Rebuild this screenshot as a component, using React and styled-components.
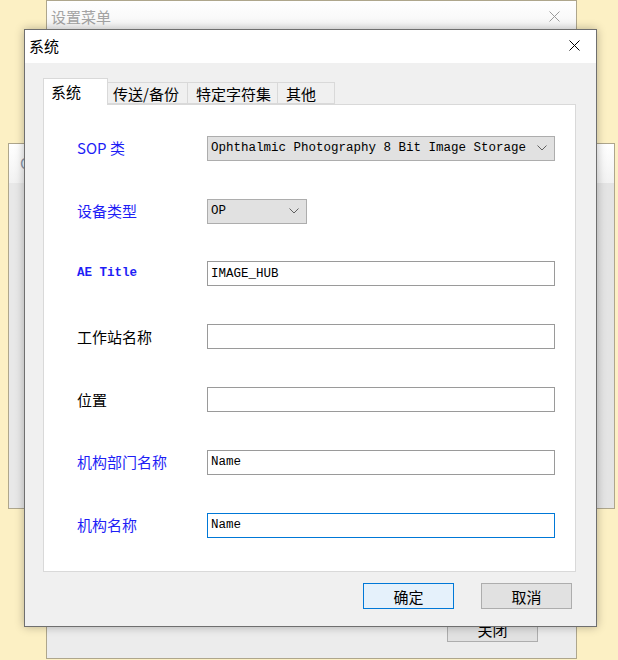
import React from 'react'
import styled, { createGlobalStyle } from 'styled-components'

const cjk = '"Noto Sans CJK SC", "Noto Sans", sans-serif'
const mono = '"Liberation Mono", "DejaVu Sans Mono", monospace'

const GlobalStyle = createGlobalStyle`
  html, body {
    margin: 0;
    padding: 0;
    background: #fcf0c4;
    font-family: ${cjk};
  }
`

export default function App() {
  return (
    <Desktop>
      <GlobalStyle />

      <Window $left={46} $top={0} $width={531} $height={659}>
        <TitleBar $h={36} $lift={5}>
          <TitleText $faded>设置菜单</TitleText>
          <CloseIcon color="#9a9a9a" />
        </TitleBar>
        <WindowBody>
          <BackFooter>
            <Button>关闭</Button>
          </BackFooter>
        </WindowBody>
      </Window>

      <Window $left={8} $top={143} $width={607} $height={366}>
        <TitleBar $h={39} $lift={3}>
          <TitleText $faded $pad={11} $tint>Options</TitleText>
        </TitleBar>
        <WindowBody $shade />
      </Window>

      <Dialog>
        <TitleBar $h={33} $lift={3} $white>
          <TitleText>系统</TitleText>
          <CloseIcon color="#000" />
        </TitleBar>

        <DialogBody>
          <Tabs>
            <Tab $active $w={65} $pad={7}>系统</Tab>
            <Tab $w={81} $pad={5}>传送/备份</Tab>
            <Tab $w={91} $pad={8}>特定字符集</Tab>
            <Tab $w={58} $pad={8}>其他</Tab>
          </Tabs>

          <Panel>
            <FormGrid>
              <Label $blue>SOP 类</Label>
              <Combo $w={348}>
                <span>Ophthalmic Photography 8 Bit Image Storage</span>
                <Chevron />
              </Combo>

              <Label $blue>设备类型</Label>
              <Combo $w={100}>
                <span>OP</span>
                <Chevron />
              </Combo>

              <Label $blue $mono>AE Title</Label>
              <TextBox readOnly defaultValue="IMAGE_HUB" />

              <Label>工作站名称</Label>
              <TextBox readOnly defaultValue="" />

              <Label>位置</Label>
              <TextBox readOnly defaultValue="" />

              <Label $blue>机构部门名称</Label>
              <TextBox readOnly defaultValue="Name" />

              <Label $blue>机构名称</Label>
              <TextBox readOnly defaultValue="Name" $focus />
            </FormGrid>
          </Panel>

          <Footer>
            <Button $primary>确定</Button>
            <Button>取消</Button>
          </Footer>
        </DialogBody>
      </Dialog>
    </Desktop>
  )
}

function CloseIcon({ color }) {
  return (
    <svg width="11" height="11" viewBox="0 0 11 11">
      <path d="M0.5 0.5 L10.5 10.5 M10.5 0.5 L0.5 10.5" stroke={color} strokeWidth="1" fill="none" />
    </svg>
  )
}

function Chevron() {
  return (
    <svg width="10" height="6" viewBox="0 0 10 6">
      <path d="M0.5 0.5 L5 5 L9.5 0.5" stroke="#606060" strokeWidth="1" fill="none" />
    </svg>
  )
}

const Desktop = styled.div`
  position: relative;
  width: 618px;
  height: 660px;
  overflow: hidden;
  background: #fcf0c4;
`

const Window = styled.div`
  position: absolute;
  left: ${p => p.$left}px;
  top: ${p => p.$top}px;
  width: ${p => p.$width}px;
  height: ${p => p.$height}px;
  box-sizing: border-box;
  border: 1px solid #aea68c;
  background: #ececec;
  display: flex;
  flex-direction: column;
  overflow: hidden;
`

const TitleBar = styled.div`
  height: ${p => p.$h}px;
  box-sizing: border-box;
  flex: none;
  display: flex;
  align-items: center;
  justify-content: space-between;
  padding: 0 16px ${p => p.$lift ?? 0}px 0;
  background: ${p => (p.$white ? '#ffffff' : 'linear-gradient(#ffffff, #f2f2f2)')};
`

const TitleText = styled.span`
  font-family: ${cjk};
  font-size: 15px;
  line-height: 1;
  padding-left: ${p => p.$pad ?? 4}px;
  color: ${p => (p.$tint ? '#8a96a8' : p.$faded ? '#a3a3a3' : '#000')};
`

const WindowBody = styled.div`
  flex: 1;
  display: flex;
  flex-direction: column;
  justify-content: flex-end;
  background: ${p => (p.$shade ? 'linear-gradient(90deg, #e8e8e8, #e4e4e4)' : '#ececec')};
`

const BackFooter = styled.div`
  display: flex;
  justify-content: flex-end;
  padding: 0 38px 16px 0;
`

const Dialog = styled.div`
  position: absolute;
  left: 24px;
  top: 29px;
  width: 573px;
  height: 598px;
  box-sizing: border-box;
  border: 1px solid #6f6f6f;
  background: #f0f0f0;
  box-shadow: 0 0 9px rgba(0, 0, 0, 0.28);
  display: flex;
  flex-direction: column;
`

const DialogBody = styled.div`
  flex: 1;
  display: flex;
  flex-direction: column;
  padding: 15px 20px 0 18px;
`

const Tabs = styled.div`
  display: flex;
  align-items: flex-end;
  height: 26px;
  position: relative;
  z-index: 1;
`

const Tab = styled.div`
  box-sizing: border-box;
  width: ${p => p.$w}px;
  height: ${p => (p.$active ? 27 : 22)}px;
  margin-bottom: ${p => (p.$active ? -1 : 0)}px;
  border: 1px solid #d9d9d9;
  border-bottom: ${p => (p.$active ? 'none' : '1px solid #d9d9d9')};
  margin-left: -1px;
  background: ${p => (p.$active ? '#ffffff' : '#f0f0f0')};
  font-family: ${cjk};
  font-size: 15px;
  line-height: 1;
  color: #000;
  display: flex;
  align-items: center;
  padding: ${p => (p.$active ? `0 0 1px ${p.$pad}px` : `0 0 0 ${p.$pad}px`)};
  white-space: nowrap;

  &:first-child {
    margin-left: 0;
  }
`

const Panel = styled.div`
  height: 468px;
  box-sizing: border-box;
  background: #ffffff;
  border: 1px solid #d9d9d9;
  padding: 12px 20px 0 33px;
`

const FormGrid = styled.div`
  display: grid;
  grid-template-columns: 130px 1fr;
  grid-auto-rows: 62.8px;
  align-items: center;
`

const Label = styled.span`
  font-family: ${p => (p.$mono ? mono : cjk)};
  font-size: ${p => (p.$mono ? 12.5 : 15)}px;
  font-weight: ${p => (p.$mono ? 700 : 400)};
  line-height: 1;
  padding-bottom: ${p => (p.$mono ? 2 : 1)}px;
  color: ${p => (p.$blue ? '#1e1ef6' : '#000')};
`

const Combo = styled.div`
  box-sizing: border-box;
  width: ${p => p.$w}px;
  height: 25px;
  border: 1px solid #adadad;
  background: #e1e1e1;
  display: flex;
  align-items: center;
  justify-content: space-between;
  padding: 0 7px 0 3px;
  font-family: ${mono};
  font-size: 12.5px;
  color: #000;
  white-space: nowrap;
`

const TextBox = styled.input`
  box-sizing: border-box;
  width: 348px;
  height: 25px;
  margin: 0;
  border: 1px solid ${p => (p.$focus ? '#0078d7' : '#9a9a9a')};
  background: #ffffff;
  padding: 0 3px;
  font-family: ${mono};
  font-size: 12.5px;
  color: #000;
  outline: none;
`

const Footer = styled.div`
  display: flex;
  justify-content: flex-end;
  gap: 27px;
  padding: 11px 4px 0 0;
`

const Button = styled.div`
  box-sizing: border-box;
  width: 91px;
  height: 26px;
  border: 1px solid ${p => (p.$primary ? '#0078d7' : '#adadad')};
  background: ${p => (p.$primary ? '#e5f1fb' : '#e1e1e1')};
  display: flex;
  align-items: center;
  justify-content: center;
  font-family: ${cjk};
  font-size: 15px;
  line-height: 1;
  color: #000;
`
